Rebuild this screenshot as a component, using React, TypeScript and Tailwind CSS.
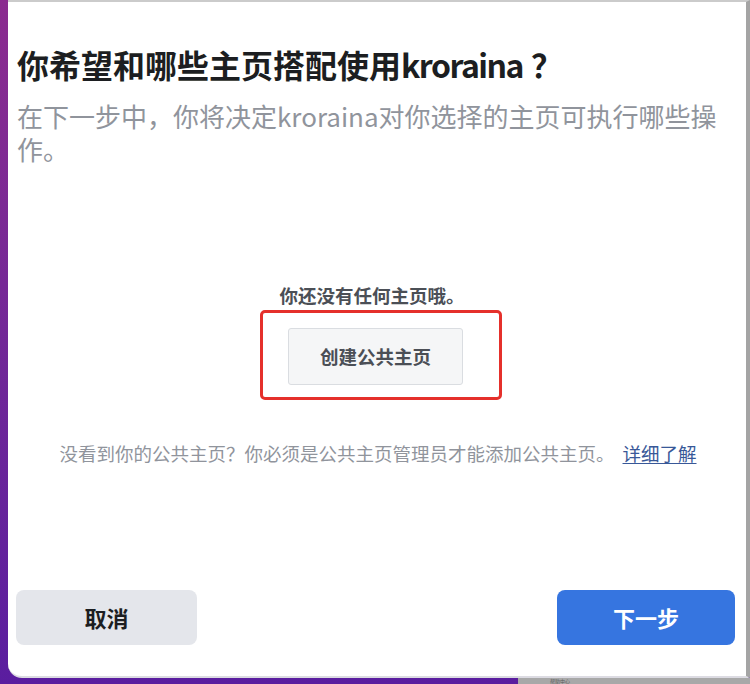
import * as React from "react";

const font = { fontFamily: '"Noto Sans CJK SC", "Noto Sans", sans-serif' };

export default function App() {
  return (
    <div
      className="w-[750px] h-[684px] flex flex-col bg-linear-to-b from-[#8b2b8f] to-[#5a1d9f] overflow-hidden"
      style={font}
    >
      <div className="flex flex-1 min-h-0">
        <div className="w-[8px] shrink-0" />
        <div className="flex-1 flex flex-col bg-white border-t-2 border-t-[#cbcbcb] border-r-4 border-r-[#a4a4a4] border-b-2 border-b-[#dcdbe2] rounded-bl-[14px]">
          <h1 className="mt-[42px] pl-[9px] text-[32px] leading-[40px] font-bold text-[#1c1e21]">
            你希望和哪些主页搭配使用<span className="tracking-[-1.5px]">kroraina</span>
            <span className="ml-[8px]">？</span>
          </h1>
          <p className="mt-[15px] pl-[9px] pr-[14px] text-[26px] leading-[33px] text-[#90949c]">
            在下一步中，你将决定kroraina对你选择的主页可执行哪些操作。
          </p>

          <div className="flex flex-col items-center">
            <div className="mt-[118px] mr-[10px] text-[18.5px] leading-[24px] font-bold text-[#4b4f56]">
              你还没有任何主页哦。
            </div>
            <div className="mt-[3px] ml-[8px] w-[242px] h-[90px] border-[3px] border-[#e5302b] rounded-[5px] pl-[25px] pt-[15px]">
              <button className="w-[175px] h-[57px] bg-[#f5f6f7] border border-[#dadde1] rounded-[3px] text-[18.5px] font-bold text-[#4b4f56]">
                创建公共主页
              </button>
            </div>
            <div className="mt-[41px] ml-[2px] text-[18.5px] leading-[24px] text-[#90949c] whitespace-nowrap">
              没看到你的公共主页？你必须是公共主页管理员才能添加公共主页。
              <a className="ml-[8px] text-[#385898] underline underline-offset-2">详细了解</a>
            </div>
          </div>

          <div className="mt-[125px] flex justify-between pl-[8px] pr-[11px]">
            <button className="w-[181px] h-[55px] rounded-[8px] bg-[#e4e6eb] text-[22px] font-bold text-[#1c1e21]">
              取消
            </button>
            <button className="w-[178px] h-[55px] rounded-[8px] bg-[#3675e0] text-[22px] font-bold text-white">
              下一步
            </button>
          </div>
        </div>
      </div>
      <div className="h-[6px] flex shrink-0">
        <div className="flex-1" />
        <div className="w-[232px] bg-[#a8a8a8] overflow-hidden pl-[32px]">
          <div className="text-[5px] leading-[6px] text-[#5c5c5c]">帮助中心</div>
        </div>
      </div>
    </div>
  );
}
